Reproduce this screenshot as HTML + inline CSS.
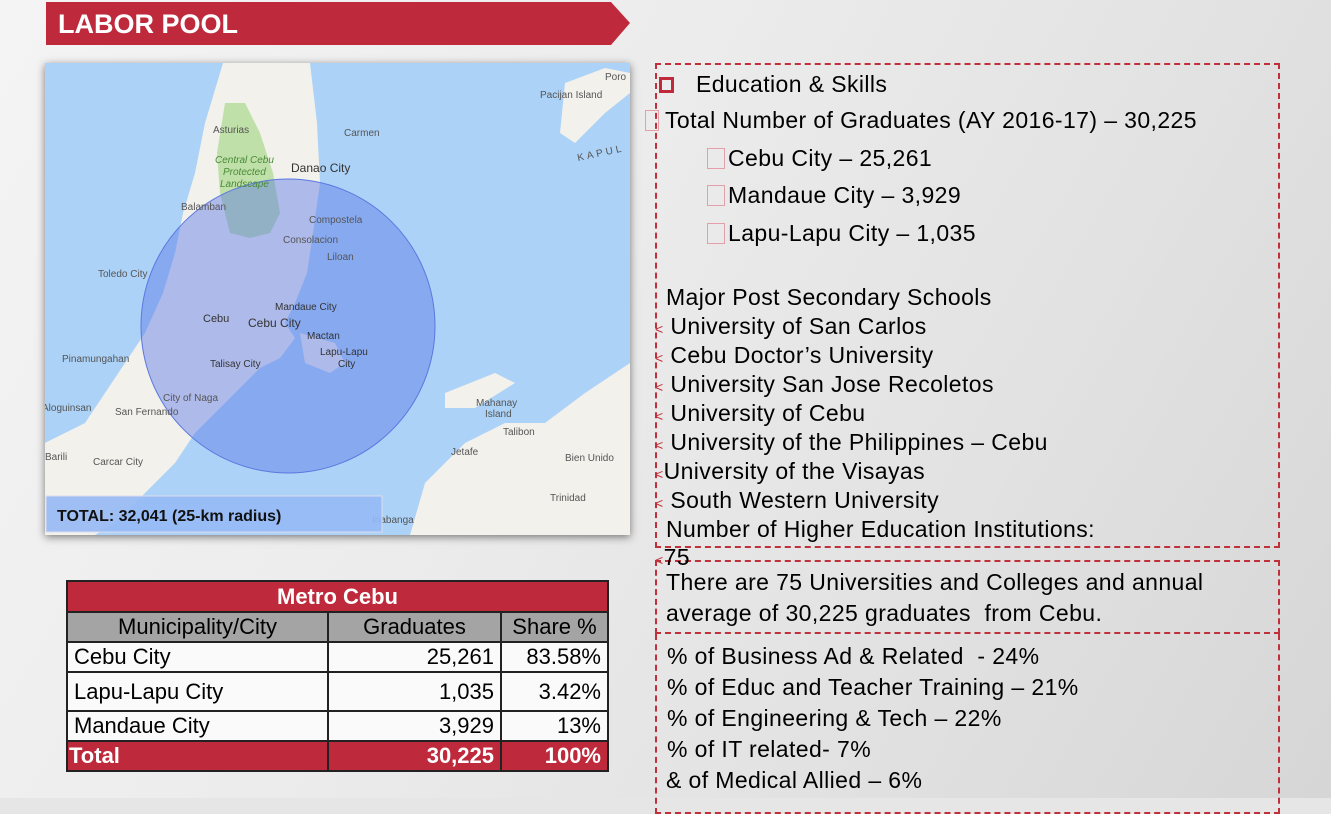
<!DOCTYPE html>
<html><head><meta charset="utf-8"><style>
*{margin:0;padding:0;box-sizing:border-box}
html{background:#e6e6e6}
body{width:1331px;height:798px;overflow:hidden;position:relative;font-family:"Liberation Sans",sans-serif;background:linear-gradient(120deg,#f4f4f4 0%,#ececec 40%,#e2e2e2 70%,#d6d6d6 100%)}
.banner{position:absolute;left:46px;top:2px;width:584px;height:43px;background:#be2a3b;clip-path:polygon(0 0,565px 0,584px 21px,565px 43px,0 43px)}
.banner span{position:absolute;left:12px;top:7px;color:#fff;font-weight:bold;font-size:27px;letter-spacing:0}
.map{position:absolute;left:45px;top:63px;width:585px;height:472px;overflow:hidden;box-shadow:0 2px 8px rgba(0,0,0,.5)}
.t{position:absolute;color:#000;font-size:23px;white-space:nowrap;letter-spacing:0.4px}
.box{position:absolute;border:2px dashed #c0303a}
table{position:absolute;left:66px;top:580px;width:543px;border-collapse:collapse;font-size:22px}
td{border:2px solid #222;height:30px;padding:0 6px;line-height:26px}
.sq{display:inline-block;width:18px;height:21px;border:1px solid #e2a0a8;vertical-align:-3px;margin-right:3px}
.lt{color:#c0303a;font-size:14px}
</style></head><body>
<div class="banner"><span>LABOR POOL</span></div>
<div class="map">
<svg width="585" height="472" viewBox="0 0 585 472">
<rect width="585" height="472" fill="#acd2f7"/>
<path d="M178 0 L265 0 L272 60 L275 120 L268 170 L262 210 L250 240 L240 260 L250 275 L235 295 L215 305 L190 330 L170 350 L150 370 L130 400 L110 420 L90 440 L70 460 L50 472 L0 472 L0 380 L40 360 L60 330 L80 300 L100 270 L118 230 L130 190 L138 150 L150 110 L160 60 Z" fill="#f2f1ec"/>
<path d="M0 470 L0 380 L20 370 L40 400 L30 440 Z" fill="#f2f1ec"/>
<path d="M180 40 L200 40 L215 70 L228 110 L235 150 L225 170 L205 175 L185 170 L175 130 L172 90 Z" fill="#bfe0a8"/>
<path d="M365 472 L380 420 L420 380 L460 360 L500 360 L540 330 L585 300 L585 472 Z" fill="#f2f1ec"/>
<path d="M400 330 L450 310 L470 320 L430 345 L400 345 Z" fill="#f2f1ec"/>
<path d="M520 20 L560 5 L585 10 L585 30 L560 50 L530 80 L515 70 Z" fill="#f2f1ec"/>
<path d="M255 270 L290 280 L300 300 L285 310 L260 300 Z" fill="#f2f1ec"/>
<circle cx="243" cy="263" r="147" fill="rgba(90,120,230,0.45)" stroke="#5a78e0" stroke-width="1"/>
<g font-family="Liberation Sans" font-size="10" fill="#555">
<text x="168" y="70">Asturias</text><text x="299" y="73">Carmen</text>
<text x="170" y="100" fill="#4a8a3a" font-style="italic">Central Cebu</text>
<text x="178" y="112" fill="#4a8a3a" font-style="italic">Protected</text>
<text x="175" y="124" fill="#4a8a3a" font-style="italic">Landscape</text>
<text x="246" y="109" font-size="12" fill="#333">Danao City</text>
<text x="136" y="147">Balamban</text><text x="264" y="160">Compostela</text>
<text x="238" y="180">Consolacion</text><text x="282" y="197">Liloan</text>
<text x="53" y="214">Toledo City</text><text x="230" y="247" fill="#333">Mandaue City</text>
<text x="158" y="259" fill="#333" font-size="11">Cebu</text><text x="203" y="264" fill="#333" font-size="12">Cebu City</text>
<text x="262" y="276" fill="#333">Mactan</text><text x="275" y="292" fill="#333">Lapu-Lapu</text><text x="293" y="304" fill="#333">City</text>
<text x="17" y="299">Pinamungahan</text><text x="165" y="304" fill="#333">Talisay City</text>
<text x="118" y="338">City of Naga</text><text x="-3" y="348">Aloguinsan</text><text x="70" y="352">San Fernando</text>
<text x="431" y="343">Mahanay</text><text x="440" y="354">Island</text><text x="458" y="372">Talibon</text>
<text x="406" y="392">Jetafe</text><text x="0" y="397">Barili</text><text x="48" y="402">Carcar City</text>
<text x="520" y="398">Bien Unido</text><text x="505" y="438">Trinidad</text><text x="327" y="460">Inabanga</text>
<text x="495" y="35">Pacijan Island</text><text x="560" y="17">Poro</text>
<text x="533" y="98" letter-spacing="3" transform="rotate(-12 533 98)">KAPUL</text>
</g>
<rect x="1" y="433" width="336" height="36" fill="rgba(150,185,245,0.9)" stroke="#dde" />
<text x="12" y="458" font-family="Liberation Sans" font-weight="bold" font-size="16" fill="#111">TOTAL: 32,041 (25-km radius)</text>
</svg>
</div>
<table>
<tr><td colspan="3" style="background:#be2a3b;color:#fff;font-weight:bold;text-align:center;height:31px">Metro Cebu</td></tr>
<tr style="background:#a4a4a4"><td style="text-align:center;width:261px">Municipality/City</td><td style="text-align:center;width:173px">Graduates</td><td style="text-align:center">Share %</td></tr>
<tr style="background:#fafafa"><td>Cebu City</td><td style="text-align:right">25,261</td><td style="text-align:right">83.58%</td></tr>
<tr style="background:#fafafa"><td style="height:39px">Lapu-Lapu City</td><td style="text-align:right">1,035</td><td style="text-align:right">3.42%</td></tr>
<tr style="background:#fafafa"><td>Mandaue City</td><td style="text-align:right">3,929</td><td style="text-align:right">13%</td></tr>
<tr style="background:#be2a3b;color:#fff;font-weight:bold"><td style="padding-left:1px;height:29px">Total</td><td style="text-align:right">30,225</td><td style="text-align:right">100%</td></tr>
</table>
<div class="box" style="left:655px;top:63px;width:625px;height:485px"></div>
<div class="box" style="left:655px;top:560px;width:625px;height:74px"></div>
<div class="box" style="left:655px;top:634px;width:625px;height:180px;border-top:none"></div>
<div class="t" style="left:659px;top:71px"><span style="display:inline-block;width:15px;height:16px;border:3px solid #be2a3b;margin-right:22px;vertical-align:-1px"></span>Education &amp; Skills</div>
<div class="t" style="left:645px;top:107px"><span class="sq" style="width:14px;margin-right:6px"></span>Total Number of Graduates (AY 2016-17) – 30,225</div>
<div class="t" style="left:707px;top:145px"><span class="sq"></span>Cebu City – 25,261</div>
<div class="t" style="left:707px;top:182px"><span class="sq"></span>Mandaue City – 3,929</div>
<div class="t" style="left:707px;top:220px"><span class="sq"></span>Lapu-Lapu City – 1,035</div>
<div class="t" style="left:666px;top:284px">Major Post Secondary Schools</div>
<div class="t" style="left:655px;top:313px"><span class="lt">&lt;</span> University of San Carlos</div>
<div class="t" style="left:655px;top:342px"><span class="lt">&lt;</span> Cebu Doctor’s University</div>
<div class="t" style="left:655px;top:371px"><span class="lt">&lt;</span> University San Jose Recoletos</div>
<div class="t" style="left:655px;top:400px"><span class="lt">&lt;</span> University of Cebu</div>
<div class="t" style="left:655px;top:429px"><span class="lt">&lt;</span> University of the Philippines – Cebu</div>
<div class="t" style="left:655px;top:458px"><span class="lt">&lt;</span>University of the Visayas</div>
<div class="t" style="left:655px;top:487px"><span class="lt">&lt;</span> South Western University</div>
<div class="t" style="left:666px;top:516px">Number of Higher Education Institutions:</div>
<div class="t" style="left:655px;top:544px"><span class="lt">&lt;</span>75</div>
<div class="t" style="left:666px;top:569px">There are 75 Universities and Colleges and annual</div>
<div class="t" style="left:666px;top:600px">average of 30,225 graduates&nbsp; from Cebu.</div>
<div class="t" style="left:667px;top:643px">% of Business Ad &amp; Related&nbsp; - 24%</div>
<div class="t" style="left:667px;top:674px">% of Educ and Teacher Training – 21%</div>
<div class="t" style="left:667px;top:705px">% of Engineering &amp; Tech – 22%</div>
<div class="t" style="left:667px;top:736px">% of IT related- 7%</div>
<div class="t" style="left:666px;top:767px">&amp; of Medical Allied – 6%</div>
</body></html>
